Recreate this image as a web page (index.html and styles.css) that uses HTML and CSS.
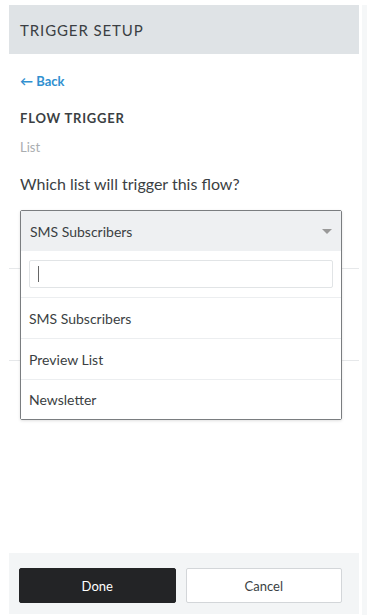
FILE: index.html
```html
<!DOCTYPE html>
<html>
<head>
<meta charset="utf-8">
<link rel="stylesheet" href="styles.css">
</head>
<body>
<div class="page">
  <div class="panel">
    <div class="header">TRIGGER SETUP</div>
    <div class="content">
      <a class="back"><span class="arrow">&#8592;</span> Back</a>
      <div class="title">FLOW TRIGGER</div>
      <div class="subtitle">List</div>
      <div class="question">Which list will trigger this flow?</div>
      <div class="field">
        <div class="rule rule1"></div>
        <div class="rule rule2"></div>
        <div class="select">
          <div class="select-head">
            <span>SMS Subscribers</span>
            <span class="caret"></span>
          </div>
          <div class="menu">
            <div class="search-wrap"><div class="search"><span class="cursor"></span></div></div>
            <div class="option">SMS Subscribers</div>
            <div class="option">Preview List</div>
            <div class="option last">Newsletter</div>
          </div>
        </div>
      </div>
    </div>
    <div class="footer">
      <button class="btn primary">Done</button>
      <button class="btn secondary">Cancel</button>
    </div>
  </div>
  <div class="side"></div>
</div>
</body>
</html>
```
FILE: styles.css
```css
* { box-sizing: border-box; }
html, body { margin: 0; padding: 0; background: #fff; }
body {
  font-family: Lato, "Open Sans", sans-serif;
  color: #373a3c;
  width: 367px;
  height: 615px;
  overflow: hidden;
}
.page {
  display: flex;
  height: 615px;
  padding-left: 9px;
  padding-top: 5px;
}
.panel {
  width: 350px;
  height: 609px;
  display: flex;
  flex-direction: column;
  background: #fff;
}
.side {
  flex: 1;
  margin-left: 3px;
  background: #f5f7f8;
}
.header {
  height: 49px;
  background: #dfe3e6;
  padding-left: 11px;
  display: flex;
  align-items: center;
  font-size: 15px;
  letter-spacing: 0.9px;
  color: #3b3f43;
}
.content {
  flex: 1;
  padding: 0 17px 0 11px;
}
.back {
  display: block;
  margin-top: 18px;
  color: #3090d0;
  font-weight: 700;
  font-size: 13px;
  line-height: 18px;
}
.arrow { font-weight: 700; }
.title {
  margin-top: 19px;
  font-size: 13px;
  font-weight: 700;
  letter-spacing: 0.8px;
  line-height: 18px;
  color: #3b3f43;
}
.subtitle {
  margin-top: 11px;
  font-size: 13px;
  line-height: 18px;
  color: #a9adb0;
}
.question {
  margin-top: 17px;
  font-size: 16px;
  line-height: 22px;
  color: #3b3f43;
}
.field {
  position: relative;
  margin-top: 15px;
}
.rule {
  position: absolute;
  left: -11px;
  right: -17px;
  height: 1px;
  background: #e6e8ea;
}
.rule1 { top: 58px; }
.rule2 { top: 150px; }
.select {
  position: relative;
  border: 1px solid #7a7d80;
  border-radius: 2px;
  background: #fff;
  box-shadow: 0 1px 3px rgba(0,0,0,0.12);
}
.select-head {
  height: 40px;
  background: #eef0f2;
  display: flex;
  align-items: center;
  justify-content: space-between;
  padding: 0 9px 0 9px;
  font-size: 14px;
  color: #3b3f43;
}
.caret {
  width: 0; height: 0;
  border-left: 5px solid transparent;
  border-right: 5px solid transparent;
  border-top: 5px solid #999;
}
.menu { background: #fff; }
.search-wrap {
  padding: 9px 8px 9px 8px;
  border-bottom: 1px solid #eceef0;
}
.search {
  height: 28px;
  border: 1px solid #e1e4e6;
  border-radius: 2px;
  display: flex;
  align-items: center;
  padding-left: 8px;
}
.cursor {
  width: 1px;
  height: 16px;
  background: #666;
}
.option {
  height: 41px;
  display: flex;
  align-items: center;
  padding-left: 8px;
  font-size: 14px;
  color: #3b3f43;
  border-bottom: 1px solid #eceef0;
}
.option.last { border-bottom: 0; height: 39px; }
.footer {
  height: 61px;
  background: #f3f5f6;
  display: flex;
  gap: 10px;
  padding: 15px 17px 0 10px;
}
.btn {
  flex: 1;
  height: 35px;
  border-radius: 2px;
  font-family: Lato, "Open Sans", sans-serif;
  font-size: 13px;
  font-weight: 400;
}
.primary {
  background: #232426;
  color: #fff;
  border: 1px solid #232426;
}
.secondary {
  background: #fff;
  color: #3b3f43;
  border: 1px solid #d3d6d9;
}
```
